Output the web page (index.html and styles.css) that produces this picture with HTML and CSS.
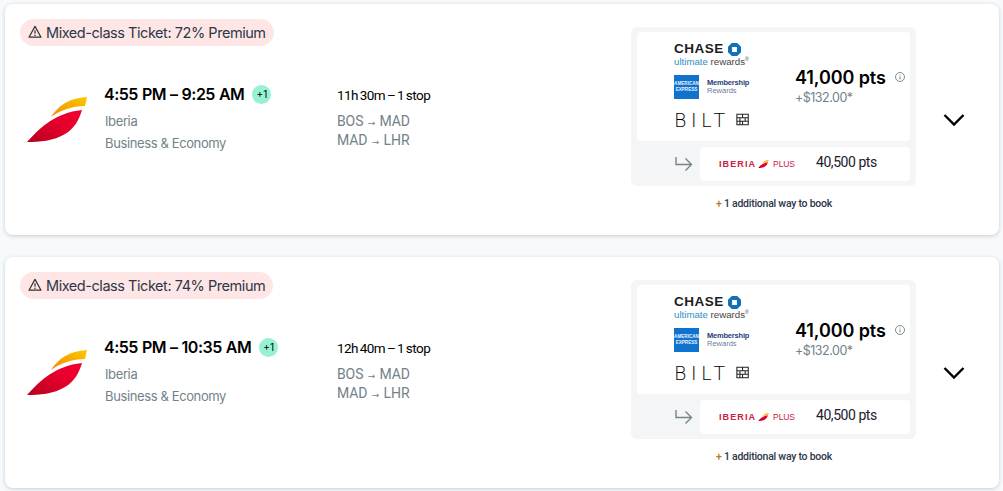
FILE: index.html
```html
<!DOCTYPE html>
<html lang="en">
<head>
<meta charset="utf-8">
<title>Flights</title>
<link rel="stylesheet" href="styles.css">
</head>
<body>
<svg class="defs" width="0" height="0" aria-hidden="true">
  <defs>
    <linearGradient id="red" x1="0" y1="1" x2="1" y2="0"><stop offset="0" stop-color="#b8001f"/><stop offset="0.6" stop-color="#e8002c"/><stop offset="1" stop-color="#f00030"/></linearGradient>
    <linearGradient id="gold" x1="0" y1="1" x2="1" y2="0"><stop offset="0" stop-color="#f08a00"/><stop offset="1" stop-color="#ffc800"/></linearGradient>
    <symbol id="wing" viewBox="0 0 60 45">
      <path fill="url(#red)" d="M0 45C14 30 28 16 55 13C52 23 47 32 38 37C27 44 12 45 0 45Z"/>
      <path fill="url(#gold)" d="M24 20C31 9 42 1 60 0L58 9C45 9 34 13 24 20Z"/>
    </symbol>
    <symbol id="warn" viewBox="0 0 14 14">
      <path fill="none" stroke="#333" stroke-width="1.2" stroke-linejoin="round" d="M7 1.400 13 12.200H1Z"/>
      <path stroke="#333" stroke-width="1.2" d="M7 5.200v3.600M7 9.800v1.200"/>
    </symbol>
    <symbol id="octagon" viewBox="0 0 16 16">
      <path fill="#1170b8" fill-rule="evenodd" d="M4.700 0h6.600L16 4.700v6.600L11.300 16H4.700L0 11.300V4.700ZM5 5v6h6V5Z"/>
    </symbol>
    <symbol id="bilt" viewBox="0 0 16 16">
      <path fill="none" stroke="#222" stroke-width="1.200" d="M1 1.500h13v12H1ZM1 5.500h13M1 9.500h13M7.500 1.500v4M4.500 5.500v8M10.500 5.500v4M7.500 9.500v4"/>
    </symbol>
  </defs>
</svg>
<main class="list">
  <article class="card">
    <div class="main">
      <div class="pill"><svg class="warn"><use href="#warn"/></svg><span>Mixed-class Ticket: 72% Premium</span></div>
      <div class="flight">
        <svg class="wing"><use href="#wing"/></svg>
        <div class="info">
          <div class="times"><span>4:55 PM – 9:25 AM</span><span class="plus">+1</span></div>
          <div class="muted">Iberia</div>
          <div class="muted">Business &amp; Economy</div>
        </div>
        <div class="route">
          <div class="dur">11h 30m – 1 stop</div>
          <div class="leg">BOS <i>→</i> MAD</div>
          <div class="leg">MAD <i>→</i> LHR</div>
        </div>
      </div>
    </div>
    <div class="pricing">
      <div class="panel">
        <div class="top">
          <div class="brands">
            <div class="chase"><div class="chase-word">CHASE<svg class="octagon"><use href="#octagon"/></svg></div><div class="ur"><b>ultimate</b> rewards<sup>®</sup></div></div>
            <div class="amex"><div class="amex-box">AMERICAN<br>EXPRESS</div><div class="mr"><b>Membership</b><br>Rewards</div></div>
            <div class="bilt"><span>BILT</span><svg class="bilt-mark"><use href="#bilt"/></svg></div>
          </div>
          <div class="price">
            <div class="pts"><span>41,000 pts</span><svg class="info-i" viewBox="0 0 12 12"><circle cx="6" cy="6" r="4.500" fill="none" stroke="#7b8a8e" stroke-width="1"/><path stroke="#7b8a8e" d="M6 5.500v3M6 3.500v1"/></svg></div>
            <div class="fee">+$132.00*</div>
          </div>
        </div>
        <div class="transfer">
          <svg class="arrow" viewBox="0 0 18 16"><path fill="none" stroke="#75858a" stroke-width="1.400" d="M1 1v7.500h15M10.500 2.500l6 6-6 6"/></svg>
          <div class="partner">
            <div class="iberia"><b>IBERIA</b><svg class="mini" viewBox="0 0 60 45"><use href="#wing"/></svg><span>PLUS</span></div>
            <div class="partner-pts">40,500 pts</div>
          </div>
        </div>
      </div>
      <div class="more"><em>+</em> 1 additional way to book</div>
    </div>
    <div class="toggle"><svg class="chev" viewBox="0 0 22 14"><path fill="none" stroke="#000" stroke-width="2.400" d="M1.500 2 11 11.500 20.500 2"/></svg></div>
  </article>

  <article class="card">
    <div class="main">
      <div class="pill"><svg class="warn"><use href="#warn"/></svg><span>Mixed-class Ticket: 74% Premium</span></div>
      <div class="flight">
        <svg class="wing"><use href="#wing"/></svg>
        <div class="info">
          <div class="times"><span>4:55 PM – 10:35 AM</span><span class="plus">+1</span></div>
          <div class="muted">Iberia</div>
          <div class="muted">Business &amp; Economy</div>
        </div>
        <div class="route">
          <div class="dur">12h 40m – 1 stop</div>
          <div class="leg">BOS <i>→</i> MAD</div>
          <div class="leg">MAD <i>→</i> LHR</div>
        </div>
      </div>
    </div>
    <div class="pricing">
      <div class="panel">
        <div class="top">
          <div class="brands">
            <div class="chase"><div class="chase-word">CHASE<svg class="octagon"><use href="#octagon"/></svg></div><div class="ur"><b>ultimate</b> rewards<sup>®</sup></div></div>
            <div class="amex"><div class="amex-box">AMERICAN<br>EXPRESS</div><div class="mr"><b>Membership</b><br>Rewards</div></div>
            <div class="bilt"><span>BILT</span><svg class="bilt-mark"><use href="#bilt"/></svg></div>
          </div>
          <div class="price">
            <div class="pts"><span>41,000 pts</span><svg class="info-i" viewBox="0 0 12 12"><circle cx="6" cy="6" r="4.500" fill="none" stroke="#7b8a8e" stroke-width="1"/><path stroke="#7b8a8e" d="M6 5.500v3M6 3.500v1"/></svg></div>
            <div class="fee">+$132.00*</div>
          </div>
        </div>
        <div class="transfer">
          <svg class="arrow" viewBox="0 0 18 16"><path fill="none" stroke="#75858a" stroke-width="1.400" d="M1 1v7.500h15M10.500 2.500l6 6-6 6"/></svg>
          <div class="partner">
            <div class="iberia"><b>IBERIA</b><svg class="mini" viewBox="0 0 60 45"><use href="#wing"/></svg><span>PLUS</span></div>
            <div class="partner-pts">40,500 pts</div>
          </div>
        </div>
      </div>
      <div class="more"><em>+</em> 1 additional way to book</div>
    </div>
    <div class="toggle"><svg class="chev" viewBox="0 0 22 14"><path fill="none" stroke="#000" stroke-width="2.400" d="M1.500 2 11 11.500 20.500 2"/></svg></div>
  </article>
</main>
</body>
</html>
```
FILE: styles.css
```css
* { box-sizing: border-box; }
html, body { margin: 0; padding: 0; }
body { background: #f7fafc; font-family: Inter, "Liberation Sans", sans-serif; color: #1a202c; height: 491px; overflow: hidden; }
.defs { position: absolute; }
.list { display: flex; flex-direction: column; gap: 22px; padding: 4px 4px 0 5px; }
.card { display: flex; height: 231px; background: #fff; border-radius: 8px; box-shadow: 0 1px 4px rgba(0,0,0,.18); padding: 15px 0 0 15px; }
.main { width: 611px; flex: none; }
.pill { display: inline-flex; align-items: center; height: 27px; padding: 0 8px 1px 8px; gap: 4px; background: #fee6e6; border-radius: 14px; font-size: 14.5px; letter-spacing: -0.45px; color: #2d3748; white-space: nowrap; }
.warn { width: 14px; height: 14px; flex: none; }
.flight { display: flex; margin-top: 36px; }
.wing { width: 60px; height: 45px; flex: none; margin: 15px 0 0 7px; }
.info { width: 232px; flex: none; margin-left: 18px; }
.times { display: flex; align-items: center; gap: 8px; height: 24px; font-size: 16px; font-weight: 600; color: #000; letter-spacing: -0.5px; word-spacing: 0.5px; margin: 0 0 4px -1px; white-space: nowrap; }
.plus { display: flex; align-items: center; justify-content: center; width: 19px; height: 19px; border-radius: 50%; background: #96f2d2; font-size: 10px; font-weight: 400; letter-spacing: 0; }
.muted { font-size: 13px; line-height: 22px; letter-spacing: -0.38px; color: #718289; white-space: nowrap; }
.route { font-family: Roboto, sans-serif; padding-top: 1px; }
.dur { font-size: 13.5px; line-height: 24px; letter-spacing: -0.55px; word-spacing: -1px; color: #000; margin-bottom: 5px; white-space: nowrap; }
.leg { font-size: 14px; line-height: 19px; letter-spacing: -0.1px; color: #718289; white-space: nowrap; }
.leg i { font-style: normal; font-size: 9px; line-height: 0; margin: 0 1px; font-family: "DejaVu Sans", sans-serif; }
.pricing { width: 285px; flex: none; margin-top: 8px; }
.panel { background: #f3f5f7; border-radius: 6px; padding: 5px 6px 5px 6px; height: 159px; }
.top { display: flex; height: 109px; background: #fff; border-radius: 4px; }
.brands { width: 158px; flex: none; padding: 10px 0 0 37px; }
.chase-word { display: flex; align-items: center; gap: 4px; font-size: 13.5px; line-height: 14px; font-weight: 600; letter-spacing: 0.5px; color: #1d1d1d; font-family: "Liberation Sans", sans-serif; }
.octagon { width: 13px; height: 13px; }
.ur { font-size: 9.700px; line-height: 11px; color: #444; font-family: "Liberation Sans", sans-serif; white-space: nowrap; }
.ur b { font-weight: 400; color: #2f8fc4; }
.ur sup { font-size: 5px; line-height: 0; }
.amex { display: flex; align-items: center; gap: 8px; margin-top: 8px; }
.amex-box { width: 25px; height: 24px; background: #0f72cd; color: #e8f2ff; font-size: 4.600px; line-height: 6px; text-align: center; display: flex; align-items: center; justify-content: center; font-family: "Liberation Sans", sans-serif; font-weight: 700; overflow: hidden; white-space: nowrap; }
.mr { font-size: 7.500px; line-height: 8px; color: #6e7ba6; font-family: "Liberation Sans", sans-serif; }
.mr b { color: #2a3d7c; font-weight: 700; letter-spacing: -0.2px; }
.bilt { display: flex; align-items: center; justify-content: space-between; width: 76px; margin-top: 13px; height: 16px; }
.bilt span { font-size: 19px; font-weight: 200; letter-spacing: 4.500px; line-height: 16px; color: #000; font-family: "DejaVu Sans", sans-serif; }
.bilt-mark { width: 14px; height: 14px; flex: none; }
.price { padding-top: 33px; }
.pts { display: flex; align-items: center; gap: 8px; height: 24px; font-size: 18px; font-weight: 600; color: #000; letter-spacing: -0.1px; white-space: nowrap; }
.info-i { width: 12px; height: 12px; flex: none; }
.fee { font-size: 12.500px; line-height: 18px; letter-spacing: -0.5px; color: #718289; white-space: nowrap; }
.transfer { display: flex; align-items: center; margin-top: 6px; }
.arrow { width: 18px; height: 16px; margin-left: 38px; flex: none; }
.partner { display: flex; align-items: center; margin-left: 7px; width: 210px; height: 34px; background: #fff; border-radius: 4px; }
.iberia { display: flex; align-items: center; gap: 2px; margin-left: 19px; width: 97px; font-size: 9px; color: #c8203f; font-family: "Liberation Sans", sans-serif; white-space: nowrap; }
.iberia b { letter-spacing: 1.100px; }
.iberia span { margin-left: 2px; font-size: 8.500px; letter-spacing: -0.1px; }
.mini { width: 11px; height: 8px; }
.partner-pts { font-family: Roboto, sans-serif; font-size: 14px; line-height: 28px; padding-bottom: 4px; letter-spacing: -0.45px; color: #1a202c; }
.more { margin-top: 10px; margin-left: 85px; font-family: Roboto, sans-serif; font-size: 10.500px; font-weight: 500; line-height: 16px; letter-spacing: -0.25px; color: #2d3748; white-space: nowrap; }
.more em { font-style: normal; color: #b7791f; }
.toggle { flex: 1; padding: 94px 0 0 27px; }
.chev { display: block; width: 22px; height: 14px; }
```
